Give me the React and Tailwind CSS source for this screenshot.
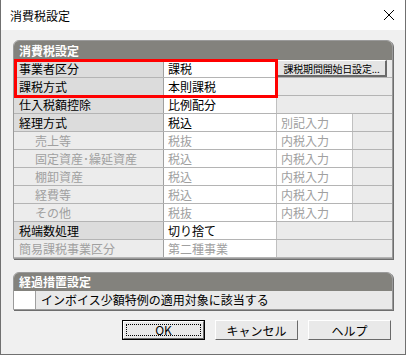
import React from "react";

const rows = [
  { label: "事業者区分", value: "課税", kind: "button" },
  { label: "課税方式", value: "本則課税", kind: "span" },
  { label: "仕入税額控除", value: "比例配分", kind: "span" },
  { label: "経理方式", value: "税込", extra: "別記入力", extraDim: true, kind: "extra" },
  { label: "売上等", value: "税抜", extra: "内税入力", dim: true, indent: true, kind: "extra" },
  { label: "固定資産･繰延資産", value: "税込", extra: "内税入力", dim: true, indent: true, kind: "extra" },
  { label: "棚卸資産", value: "税込", extra: "内税入力", dim: true, indent: true, kind: "extra" },
  { label: "経費等", value: "税込", extra: "内税入力", dim: true, indent: true, kind: "extra" },
  { label: "その他", value: "税抜", extra: "内税入力", dim: true, indent: true, kind: "extra" },
  { label: "税端数処理", value: "切り捨て", kind: "span" },
  { label: "簡易課税事業区分", value: "第二種事業", dim: true, kind: "span" },
];

const Row = ({ row }) => {
  const labelCls = row.dim
    ? "bg-[#ececec] text-[#a0a0a0]"
    : "bg-[#dcdcdc] text-black";
  return (
    <div className="flex h-[18px] border-b border-[#b4b4b4]">
      <div
        className={`w-[150px] shrink-0 border-r border-[#a0a0a0] ${labelCls} ${
          row.indent ? "pl-[21px]" : "pl-[5px]"
        }`}
      >
        {row.label}
      </div>
      <div
        className={`w-[113px] shrink-0 border-r border-[#c0c0c0] bg-white pl-[4px] ${
          row.dim ? "text-[#a0a0a0]" : "text-black"
        }`}
      >
        {row.value}
      </div>
      {row.kind === "extra" && (
        <div className="w-[76px] shrink-0 border-r border-[#c0c0c0] bg-white pl-[4px] text-[#a0a0a0]">
          {row.extra}
        </div>
      )}
      {row.kind === "button" ? (
        <div className="flex-1 bg-[#ebebeb] flex items-start">
          <div className="w-[110px] h-[17px] bg-[#e4e4e4] border-t border-l border-white border-r-2 border-b-2 border-r-[#6a6a6a] border-b-[#6a6a6a] flex items-center justify-center text-[10px] leading-[15px] text-black tracking-[-0.2px]">
            課税期間開始日設定...
          </div>
        </div>
      ) : (
        <div className="flex-1 bg-[#ebebeb]" />
      )}
    </div>
  );
};

const Button = ({ children, focused }) => (
  <div
    className={`w-[83px] h-[20px] bg-[#e9e9e9] flex items-center justify-center ${
      focused
        ? "border border-black"
        : "border-t border-l border-white border-r border-b border-r-[#6a6a6a] border-b-[#6a6a6a]"
    }`}
  >
    {focused ? (
      <div className="w-full h-full border-t border-l border-white border-r border-b border-r-[#6a6a6a] border-b-[#6a6a6a] p-[2px]">
        <div className="w-full h-full border border-dotted border-black flex items-center justify-center leading-[12px]">
          {children}
        </div>
      </div>
    ) : (
      children
    )}
  </div>
);

export default function App() {
  return (
    <div className="w-[406px] h-[355px] flex flex-col bg-[#f0f0f0] border-x border-b border-[#707070] font-['Noto_Sans_CJK_JP',sans-serif] text-[12px] leading-[17px] text-black overflow-hidden">
      <div className="h-[30px] shrink-0 bg-white flex items-center justify-between pl-[9px] pr-[9px]">
        <span className="text-[12px]">消費税設定</span>
        <svg width="12" height="12" viewBox="0 0 12 12" className="mr-[1px]">
          <path d="M1 1 L11 11 M11 1 L1 11" stroke="#000" strokeWidth="1" fill="none" />
        </svg>
      </div>
      <div className="flex-1 flex flex-col px-[12px] pt-[10px]">
        <div className="relative rounded-t-[6px] border border-[#9a9a9a] shadow-[1px_1px_0_#6e6e6e] bg-[#ebebeb]">
          <div className="h-[19px] bg-[#83827d] rounded-t-[5px] pl-[5px] text-white font-bold leading-[19px]">
            消費税設定
          </div>
          <div className="relative">
            {rows.map((r) => (
              <Row key={r.label} row={r} />
            ))}
            <div className="absolute left-0 top-[-1px] w-[264px] h-[39px] border-[3px] border-[#ff0000] pointer-events-none" />
          </div>
        </div>

        <div className="mt-[13px] rounded-t-[6px] border border-[#9a9a9a] shadow-[1px_1px_0_#6e6e6e] bg-[#e9e9e9]">
          <div className="h-[18px] bg-[#83827d] rounded-t-[5px] pl-[5px] text-white font-bold leading-[18px]">
            経過措置設定
          </div>
          <div className="flex h-[18px]">
            <div className="w-[22px] shrink-0 bg-white border-r border-[#a0a0a0]" />
            <div className="flex-1 pl-[5px]">インボイス少額特例の適用対象に該当する</div>
          </div>
        </div>

        <div className="flex justify-end gap-[10px] mt-[10px] pr-[2px]">
          <Button focused>OK</Button>
          <Button>キャンセル</Button>
          <Button>ヘルプ</Button>
        </div>
      </div>
    </div>
  );
}
